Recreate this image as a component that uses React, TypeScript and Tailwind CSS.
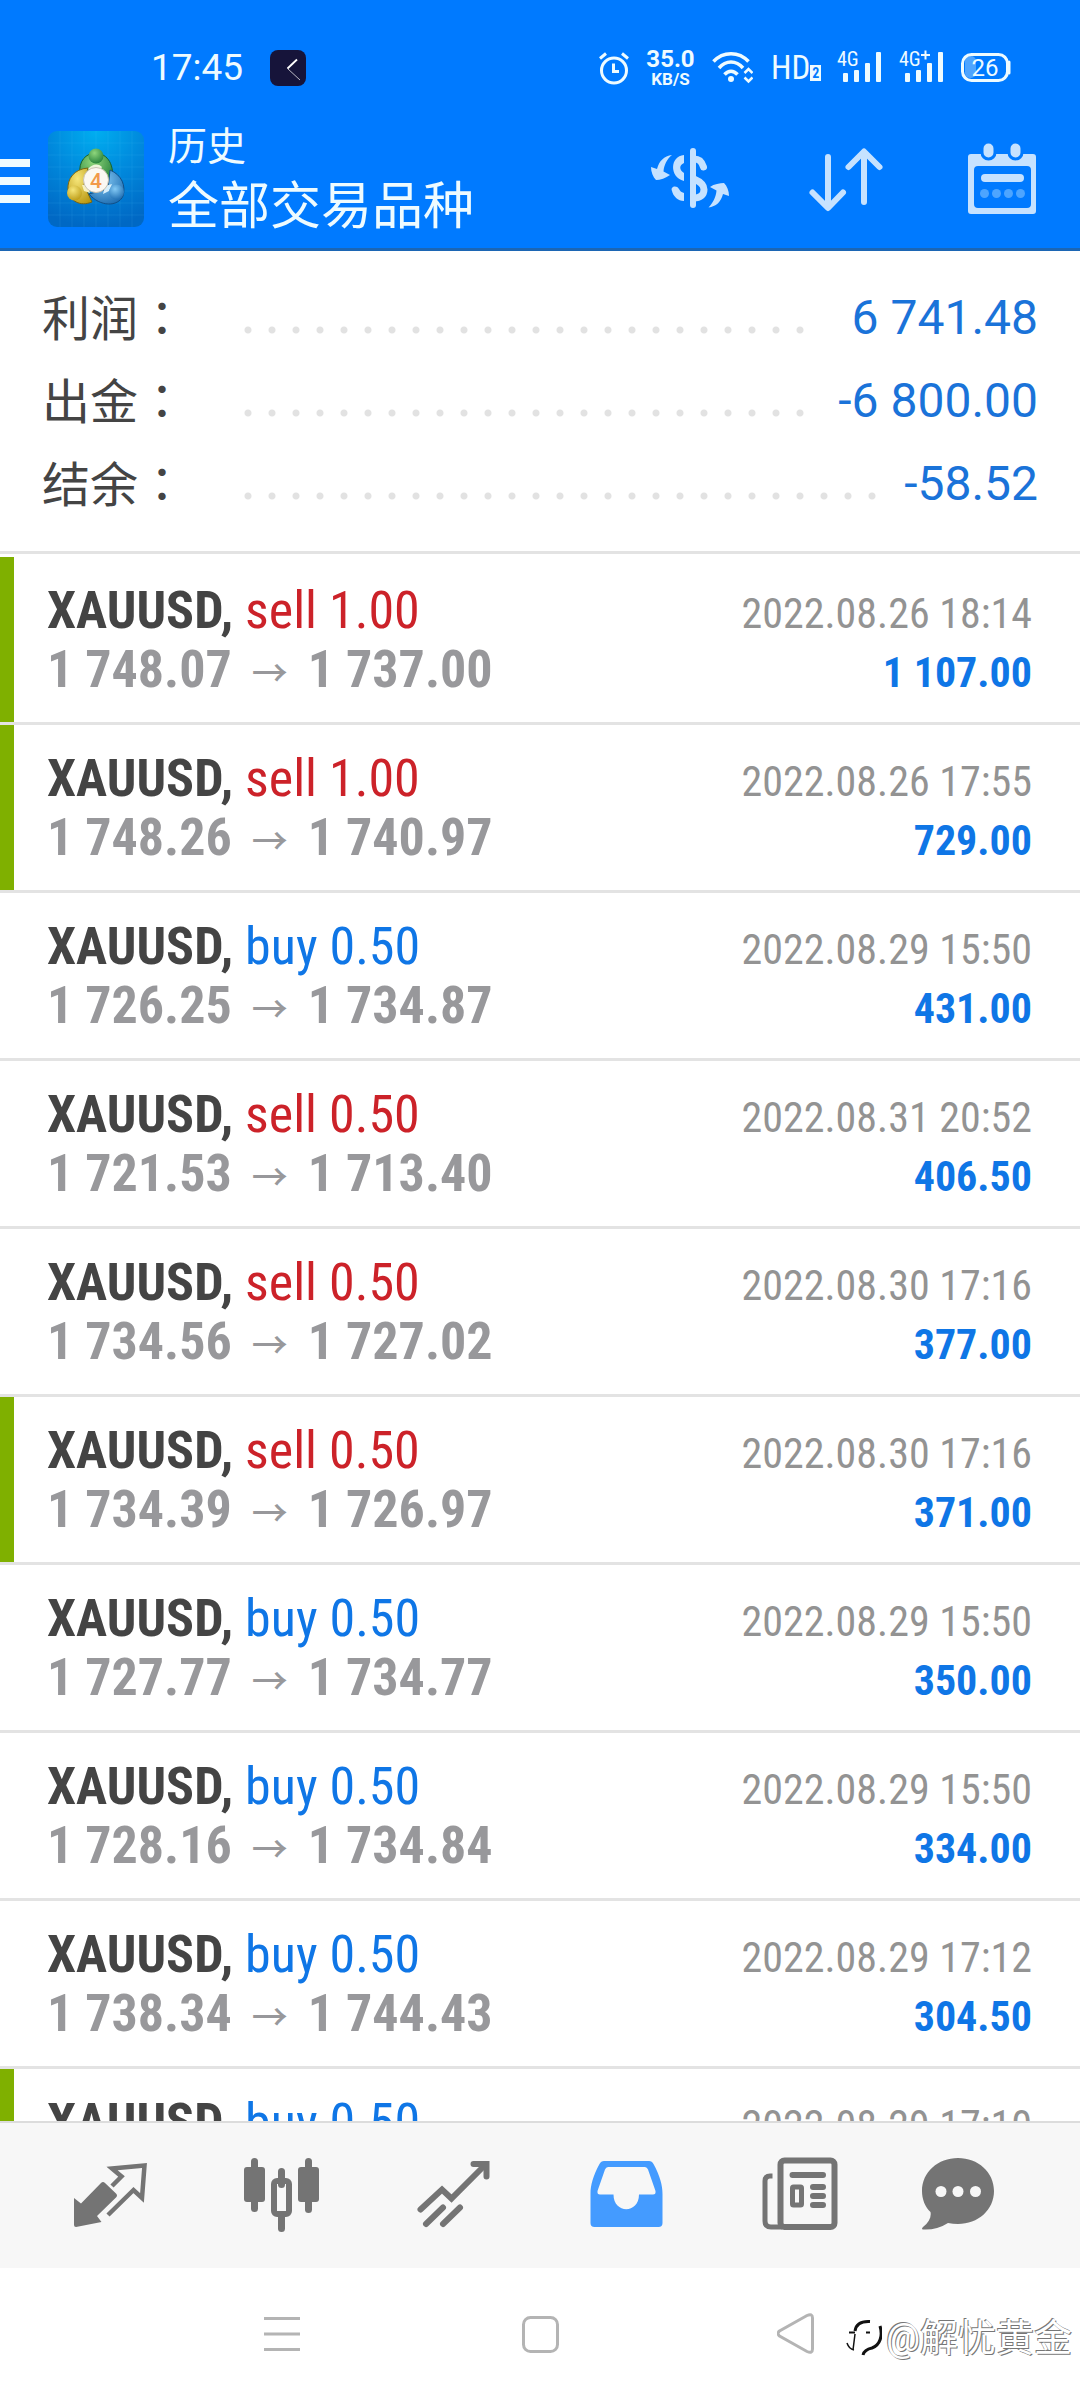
import { ReactNode } from 'react';

type Deal = {
  side: 'buy' | 'sell';
  volume: string;
  time: string;
  open?: string;
  close?: string;
  profit?: string;
  marked?: boolean;
};

const summary = [
  { label: '利润', value: '6 741.48' },
  { label: '出金', value: '-6 800.00' },
  { label: '结余', value: '-58.52' },
];

const deals: Deal[] = [
  { side: 'sell', volume: '1.00', open: '1 748.07', close: '1 737.00', time: '2022.08.26 18:14', profit: '1 107.00', marked: true },
  { side: 'sell', volume: '1.00', open: '1 748.26', close: '1 740.97', time: '2022.08.26 17:55', profit: '729.00', marked: true },
  { side: 'buy', volume: '0.50', open: '1 726.25', close: '1 734.87', time: '2022.08.29 15:50', profit: '431.00' },
  { side: 'sell', volume: '0.50', open: '1 721.53', close: '1 713.40', time: '2022.08.31 20:52', profit: '406.50' },
  { side: 'sell', volume: '0.50', open: '1 734.56', close: '1 727.02', time: '2022.08.30 17:16', profit: '377.00' },
  { side: 'sell', volume: '0.50', open: '1 734.39', close: '1 726.97', time: '2022.08.30 17:16', profit: '371.00', marked: true },
  { side: 'buy', volume: '0.50', open: '1 727.77', close: '1 734.77', time: '2022.08.29 15:50', profit: '350.00' },
  { side: 'buy', volume: '0.50', open: '1 728.16', close: '1 734.84', time: '2022.08.29 15:50', profit: '334.00' },
  { side: 'buy', volume: '0.50', open: '1 738.34', close: '1 744.43', time: '2022.08.29 17:12', profit: '304.50' },
  { side: 'buy', volume: '0.50', time: '2022.08.29 17:10', marked: true },
];

function Signal({ plus }: { plus?: boolean }) {
  return (
    <svg width="44" height="36" viewBox="0 0 44 36" fill="currentColor" className="overflow-visible">
      <text x="0" y="16" fontSize="20">
        4G
      </text>
      {plus && <path d="M22 5H31M26.500 0.500V9.500" stroke="currentColor" strokeWidth="2" />}
      <rect x="6" y="23" width="5" height="9" rx="1" />
      <rect x="17" y="20" width="5" height="12" rx="1" />
      <rect x="28" y="13" width="5" height="19" rx="1" />
      <rect x="39" y="2" width="5" height="30" rx="1" />
    </svg>
  );
}

function StatusBar() {
  return (
    <div className="flex h-[42px] items-center pl-[151px] pr-[69px] text-[#eefbff]">
      <span className="w-[119px] text-[37px] leading-[42px]">17:45</span>
      <svg width="36" height="36" viewBox="0 0 36 36">
        <rect width="36" height="36" rx="8" fill="#16143a" />
        <path d="M27 9.500L17.500 18.500" stroke="#fff" strokeWidth="1.800" />
        <path d="M17.500 18.500L30 30" stroke="#fff" strokeWidth="0.700" />
      </svg>

      <div className="ml-auto flex items-center gap-[18px] font-['Roboto_Condensed',Roboto,sans-serif]">
        <svg width="30" height="36" viewBox="0 0 30 36" fill="none" stroke="currentColor" strokeWidth="3">
          <circle cx="15" cy="20.500" r="12.500" />
          <path d="M14.500 13.500V21.500H20" />
          <path d="M1 8.500L7 3.500M29 8.500L23 3.500" />
        </svg>
        <div className="flex w-[47px] flex-col items-center font-['Roboto',sans-serif] font-bold">
          <span className="text-[24px] leading-[22px]">35.0</span>
          <span className="text-[17px] leading-[18px]">KB/S</span>
        </div>
        <svg width="41" height="36" viewBox="0 0 41 36" fill="none" stroke="currentColor" strokeWidth="3.500">
          <path d="M1.500 11.500C11 1 27 1 36.500 11.500" />
          <path d="M7 18C14 10 24 10 31 18" />
          <path d="M12.500 24.500C16.500 20 21.500 20 25.500 24.500" />
          <circle cx="19" cy="29" r="3" fill="currentColor" stroke="none" />
          <path d="M32.500 23L36.500 19L40.500 23M32.500 27.500L36.500 31.500L40.500 27.500" strokeWidth="2.500" />
        </svg>
        <div className="flex w-12 items-end">
          <span className="text-[33px] leading-[34px]">HD</span>
          <span className="mb-1 bg-[#eefbff] px-0.5 text-[14px] leading-4 font-bold text-[#007aff]">2</span>
        </div>
        <Signal />
        <Signal plus />
        <svg width="50" height="36" viewBox="0 0 50 36">
          <rect x="4" y="6" width="11" height="22" rx="5" fill="#4fa5ff" />
          <rect x="1.500" y="4.500" width="45" height="26" rx="9" fill="none" stroke="currentColor" strokeWidth="3" />
          <path d="M48 12V23" stroke="currentColor" strokeWidth="3" strokeLinecap="round" />
          <text x="24" y="26" fontSize="24" textAnchor="middle" fill="currentColor" className="font-['Roboto',sans-serif]">
            26
          </text>
        </svg>
      </div>
    </div>
  );
}

function AppLogo() {
  return (
    <svg width="96" height="96" viewBox="0 0 96 96">
      <defs>
        <radialGradient id="tile" cx="0.5" cy="0" r="1">
          <stop offset="0" stopColor="#00aef0" />
          <stop offset="0.500" stopColor="#0088dc" />
          <stop offset="1" stopColor="#0068c4" />
        </radialGradient>
        <radialGradient id="green" cx="0.400" cy="0.300" r="0.800">
          <stop offset="0" stopColor="#8fd67c" />
          <stop offset="1" stopColor="#1d7a35" />
        </radialGradient>
        <radialGradient id="yellow" cx="0.400" cy="0.300" r="0.800">
          <stop offset="0" stopColor="#f6e67a" />
          <stop offset="1" stopColor="#b8960f" />
        </radialGradient>
        <radialGradient id="blue" cx="0.400" cy="0.300" r="0.800">
          <stop offset="0" stopColor="#84caf5" />
          <stop offset="1" stopColor="#1767ad" />
        </radialGradient>
      </defs>
      <rect width="96" height="96" rx="9" fill="url(#tile)" />
      <path
        d="M12 0V96M24 0V96M36 0V96M48 0V96M60 0V96M72 0V96M84 0V96M0 12H96M0 24H96M0 36H96M0 48H96M0 60H96M0 72H96M0 84H96"
        stroke="#4fc3f5"
        strokeOpacity="0.120"
      />
      <path d="M32 44C30 30 38 22 48 22C60 23 67 34 64 52L50 42Z" fill="url(#green)" stroke="#17612b" />
      <path d="M40 37C26 38 19 48 20 59C22 70 32 76 44 71L36 54Z" fill="url(#yellow)" stroke="#7a6410" />
      <path d="M62 39C74 44 78 55 75 65C70 76 52 76 41 63L60 58Z" fill="url(#blue)" stroke="#124f87" />
      <path d="M40 38C44 33 50 32 54 36L50 42Z" fill="#eef6dc" />
      <path d="M34 54L36 60L42 62L40 54Z" fill="#f6f0c0" />
      <path d="M64 53L61 60L55 63L57 55Z" fill="#d6effc" />
      <circle cx="48" cy="25" r="7.500" fill="url(#green)" />
      <circle cx="26.500" cy="62" r="7.500" fill="url(#yellow)" />
      <circle cx="68.500" cy="61" r="7.500" fill="url(#blue)" />
      <circle cx="48" cy="49" r="12.500" fill="#fbf8f2" stroke="#c9c2b2" />
      <text x="48" y="56.500" fontSize="21" fontWeight="500" textAnchor="middle" fill="#f29a4a">
        4
      </text>
    </svg>
  );
}

function CurrencyIcon() {
  return (
    <svg width="80" height="80" viewBox="0 0 80 80" fill="none" stroke="#c6e2ff">
      <g fill="#c6e2ff" stroke="none">
        <path d="M22 16C14 17 9 22 7 30L1 28C1 33 3 38 6 41C10 41 16 39 20 36L13.500 32.500C14 26 17 20 22 16Z" />
        <path d="M58.500 68.500C66 67.500 71 63 73 55L79 57C79 52 77 47 74 44C70 44 64 45 60 48L66.500 51.500C66 58 63 64 58.500 68.500Z" />
        <path d="M34 16C20 17 19 38 34 42V34C29 31 29 26 34 24Z" />
        <path d="M22 52C20 47 27 46 29 50C30 52 31 53 34 54V62C28 62 23 57 22 52Z" />
      </g>
      <path d="M43 12V66" strokeWidth="6" strokeLinecap="round" />
      <path d="M44 20C50 20 52 23 53.500 28" strokeWidth="7" strokeLinecap="round" />
      <path d="M44 40C51 43 54 46 54 50.500C54 56 50 59 44 59" strokeWidth="7" />
    </svg>
  );
}

function SortIcon() {
  return (
    <svg width="80" height="80" viewBox="0 0 80 80" fill="none" stroke="#c6e2ff" strokeWidth="6" strokeLinecap="round" strokeLinejoin="round">
      <path d="M22 18V68M6.500 53.500L22 69L37 53.500" />
      <path d="M58 63V13M42.500 28L58 12.500L73.500 28" />
    </svg>
  );
}

function CalendarIcon() {
  return (
    <svg width="80" height="80" viewBox="0 0 80 80" fill="#c6e2ff">
      <path fillRule="evenodd" d="M9 15H71Q74 15 74 18V72Q74 75 71 75H9Q6 75 6 72V18Q6 15 9 15ZM16 27Q12 27 12 31V65Q12 69 16 69H65Q69 69 69 65V31Q69 27 65 27Z" />
      <rect x="20" y="3" width="13" height="17" rx="6.500" stroke="#007aff" strokeWidth="3" />
      <rect x="47" y="3" width="13" height="17" rx="6.500" stroke="#007aff" strokeWidth="3" />
      <rect x="19" y="35" width="43" height="8" rx="4" />
      <g fill="#4da5ff">
        <circle cx="22.500" cy="54.500" r="4.500" />
        <circle cx="34.500" cy="54.500" r="4.500" />
        <circle cx="46.500" cy="54.500" r="4.500" />
        <circle cx="58.500" cy="54.500" r="4.500" />
      </g>
    </svg>
  );
}

function Header() {
  return (
    <header className="shrink-0 border-b-[3px] border-[#1c66b4] bg-[#007aff] pt-[47px]">
      <StatusBar />
      <div className="mt-5 flex h-[139px] items-center pr-[38px]">
        <button aria-label="菜单" className="flex w-[30px] flex-col gap-2.5 pt-1">
          <span className="h-2 bg-[#eefbff]" />
          <span className="h-2 bg-[#eefbff]" />
          <span className="h-2 bg-[#eefbff]" />
        </button>
        <div className="ml-[18px]">
          <AppLogo />
        </div>
        <div className="ml-6 text-[#eefbff]">
          <p className="text-[39px] leading-[56px]">历史</p>
          <h1 className="text-[51px] leading-[64px]">全部交易品种</h1>
        </div>
        <div className="ml-auto flex gap-[76px]">
          <button aria-label="货币">
            <CurrencyIcon />
          </button>
          <button aria-label="排序">
            <SortIcon />
          </button>
          <button aria-label="日期">
            <CalendarIcon />
          </button>
        </div>
      </div>
    </header>
  );
}

function Summary() {
  return (
    <dl className="shrink-0 border-b-[3px] border-[#e3e3e3] px-[42px] pt-[25px] pb-[26px] text-[48px]">
      {summary.map(({ label, value }) => (
        <div key={label} className="flex h-[83px] items-center">
          <dt className="w-[194px] shrink-0 text-[#444]">
            {label}
            <span className="font-['Noto_Sans_CJK_TC',sans-serif]">：</span>
          </dt>
          <div className="mr-[18px] flex-1 pt-6">
            <div className="h-2 w-[round(down,100%,24px)] bg-[radial-gradient(circle,#e2e2e2_3px,transparent_4px)] bg-[length:24px_8px]" />
          </div>
          <dd className="text-[#1a73d9]">{value}</dd>
        </div>
      ))}
    </dl>
  );
}

function DealRow({ deal }: { deal: Deal }) {
  return (
    <li className="flex h-[168px] border-b-[3px] border-[#e3e3e3] font-['Roboto_Condensed',Roboto,sans-serif] text-[52px] leading-[59px]">
      <div className={deal.marked ? 'w-3.5 bg-[#7fb000]' : 'w-3.5'} />
      <div className="flex-1 pt-6 pr-12 pl-[33px]">
        <div className="flex h-[59px] items-baseline justify-between">
          <p>
            <strong className="text-[#444]">XAUUSD,</strong>{' '}
            <span className={deal.side === 'sell' ? 'text-[#cc2229]' : 'text-[#0f76e6]'}>
              {deal.side} {deal.volume}
            </span>
          </p>
          <time className="text-[42px] text-[#939393]">{deal.time}</time>
        </div>
        {deal.profit && (
          <div className="flex h-[59px] items-baseline justify-between font-bold">
            <p className="text-[#98989b]">
              {deal.open}
              <span className="mx-5 font-['Noto_Sans_CJK_SC',sans-serif] text-[36px] leading-none font-medium">→</span>
              {deal.close}
            </p>
            <span className="text-[42px] text-[#0f76e6]">{deal.profit}</span>
          </div>
        )}
      </div>
    </li>
  );
}

function QuotesIcon() {
  return (
    <>
      <path d="M12 50L19 55.500L39 35Q41 33 43 35L54 45.500Q56 47.500 54 49.500L35 68L39.500 74L14 79Q12 79 12 77Z" />
      <path
        d="M50 38L59.500 28.500L50 20.500L82.500 17.500L80 50L71.500 42L46 67"
        fill="none"
        stroke="currentColor"
        strokeWidth="4.500"
      />
    </>
  );
}

function CandlesIcon() {
  return (
    <>
      <rect x="17" y="10" width="7" height="54" rx="3.500" />
      <rect x="10" y="19" width="21" height="35" rx="3" />
      <rect x="44" y="20" width="7" height="20" rx="3.500" />
      <rect x="44" y="64" width="7" height="20" rx="3.500" />
      <rect x="40" y="33" width="15" height="33" rx="3" fill="none" stroke="currentColor" strokeWidth="6" />
      <rect x="71" y="10" width="7" height="55" rx="3.500" />
      <rect x="64" y="19" width="21" height="35" rx="3" />
    </>
  );
}

function TrendIcon() {
  return (
    <g fill="none" stroke="currentColor" strokeWidth="6" strokeLinecap="round">
      <path d="M14.500 61.500L36 41.500L45.500 50.500L79 17" />
      <path d="M67.500 16H80.500V28.500" />
      <path d="M20 76L37 59.500M37 76L54 59.500" />
    </g>
  );
}

function InboxIcon() {
  return (
    <path
      fillRule="evenodd"
      d="M26 13H71Q74 13 75.500 16C82 28 84.500 37 84.500 46V75Q84.500 79 80.500 79H16.500Q12.500 79 12.500 75V46C12.500 37 15 28 21.500 16Q23 13 26 13ZM30 19Q28 19 27 21.500L19.500 43Q19 46.500 22 46.500H35.500C35.500 66 61 66 61 46.500H75Q78 46.500 77.500 43L70 21.500Q69 19 67 19Z"
    />
  );
}

function NewsIcon() {
  return (
    <g fill="none" stroke="currentColor">
      <rect x="30.500" y="12.500" width="54" height="66.500" rx="4" strokeWidth="6" />
      <path d="M22.500 28H20Q15 28 15 33V73Q15 79 21 79H32" strokeWidth="5" />
      <path d="M42.500 27H73M63 39H73M63 48H73M63 57H73" strokeWidth="6" strokeLinecap="round" />
      <rect x="42.500" y="39" width="9" height="18" rx="1" strokeWidth="5" />
    </g>
  );
}

function ChatIcon() {
  return (
    <>
      <path d="M36 10C56 10 72 24 72 43S56 76 36 76Q31 76 26 75C18 80 10 82 1 81.500Q-1 81 1 79C7 74 9.500 69 8.500 64C3 59 0 51 0 43C0 24 16 10 36 10Z" />
      <g fill="#f7f7f7">
        <circle cx="19" cy="43.500" r="5.500" />
        <circle cx="36" cy="43.500" r="5.500" />
        <circle cx="53.500" cy="43.500" r="5.500" />
      </g>
    </>
  );
}

const tabs: { label: string; icon: ReactNode; active?: boolean }[] = [
  { label: '行情', icon: <QuotesIcon /> },
  { label: '图表', icon: <CandlesIcon /> },
  { label: '交易', icon: <TrendIcon /> },
  { label: '历史', icon: <InboxIcon />, active: true },
  { label: '新闻', icon: <NewsIcon /> },
  { label: '消息', icon: <ChatIcon /> },
];

function TabBar() {
  return (
    <nav className="flex h-[147px] shrink-0 border-t-2 border-[#dcdcdc] bg-[#f7f7f7] px-6">
      {tabs.map(({ label, icon, active }) => (
        <button
          key={label}
          aria-label={label}
          className={`flex flex-1 items-center justify-center ${active ? 'text-[#449bff]' : 'text-[#747474]'}`}
        >
          <svg width="96" height="96" viewBox="0 0 96 96" fill="currentColor">
            {icon}
          </svg>
        </button>
      ))}
    </nav>
  );
}

function SystemNav() {
  return (
    <div className="relative grid h-[132px] shrink-0 grid-cols-3 place-items-center px-[153px] text-[#b4b4b4]">
      <button aria-label="最近任务">
        <svg width="42" height="42" viewBox="0 0 42 42" stroke="currentColor" strokeWidth="3">
          <path d="M3 5.500H39M3 21H39M3 36.500H39" />
        </svg>
      </button>
      <button aria-label="主屏幕">
        <svg width="42" height="42" viewBox="0 0 42 42" fill="none" stroke="currentColor" strokeWidth="3">
          <rect x="4.500" y="4.500" width="34" height="34" rx="7" />
        </svg>
      </button>
      <button aria-label="返回">
        <svg width="42" height="42" viewBox="0 0 42 42" fill="none" stroke="currentColor" strokeWidth="3">
          <path d="M30 2.500Q35.500 0 35.500 5V36Q35.500 41 30 38.500L2.500 23Q-0.500 20.500 2.500 18Z" />
        </svg>
      </button>

      <div className="absolute right-2 bottom-[34px] flex items-center gap-1">
        <svg width="36" height="40" viewBox="0 0 36 40" fill="none" stroke="#111">
          <path d="M9 13C10 6 15 3 24 3.500" strokeWidth="3" />
          <path d="M34 8C37 18 34 27 26 30C21 31 18 33 17 37" strokeWidth="3" />
          <path d="M9 16L7 32M1 25Q3 31 8 32" strokeWidth="1.500" />
          <path d="M3 14.500H9M20 14.500H24" strokeWidth="1.800" />
        </svg>
        <span className="text-[38px] leading-[56px] text-white [text-shadow:1px_1px_0_#777,-1px_-1px_0_#777]">@解忧黄金</span>
      </div>
    </div>
  );
}

export default function App() {
  return (
    <div className="flex h-screen flex-col bg-white font-['Roboto','Noto_Sans_CJK_SC',sans-serif]">
      <Header />
      <Summary />
      <ul className="min-h-0 flex-1 overflow-y-auto pt-[3px] [scrollbar-width:none]">
        {deals.map((deal, i) => (
          <DealRow key={i} deal={deal} />
        ))}
      </ul>
      <TabBar />
      <SystemNav />
    </div>
  );
}
